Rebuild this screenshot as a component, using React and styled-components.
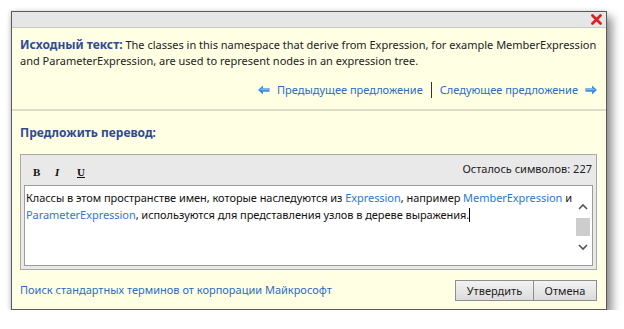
import React from 'react'
import styled, { createGlobalStyle } from 'styled-components'

const GlobalStyle = createGlobalStyle`
  body {
    margin: 0;
    background: #fff;
    font-family: 'Noto Sans', 'Liberation Sans', sans-serif;
  }
`

const Page = styled.div`
  padding: 11px 0 0 11px;
`
const Dialog = styled.div`
  width: 594px;
  height: 297px;
  border: 1px solid #5a5a5a;
  background: #ffffe3;
  box-shadow: 5px 6px 9px rgba(0, 0, 0, 0.45), -1px 0 4px rgba(0, 0, 0, 0.15);
  display: flex;
  flex-direction: column;
  font-size: 11px;
  color: #222;
`
const TitleBar = styled.div`
  height: 15px;
  background: #e6e6e6;
  border-bottom: 1px solid #c9c9c9;
  display: flex;
  justify-content: flex-end;
  align-items: center;
  padding-right: 4px;
`
const Section = styled.div`
  padding: ${(p) => p.pad || '0 9px 0 8px'};
  border-bottom: ${(p) => (p.divided ? '2px solid #dedcc8' : 'none')};
`
const Paragraph = styled.p`
  margin: 0;
  line-height: 16px;
`
const Label = styled.span`
  font-size: 12px;
  line-height: 14px;
  font-weight: bold;
  color: #2f4a96;
`
const Heading = styled.h3`
  margin: 0;
  font-size: 12px;
  line-height: 16px;
  font-weight: bold;
  color: #2f4a96;
`
const NavRow = styled.div`
  margin-top: 13px;
  display: flex;
  justify-content: flex-end;
  align-items: center;
  line-height: 16px;
`
const NavLink = styled.a`
  display: flex;
  align-items: center;
  gap: 7px;
  color: #2b6cc4;
  text-decoration: none;
  cursor: pointer;
`
const Separator = styled.span`
  width: 1px;
  height: 16px;
  background: #333;
  margin: 0 8px 0 8px;
`
const Editor = styled.div`
  margin: 13px 0 0;
  border: 1px solid #a9a9a9;
  background: #e9e9e9;
  padding: 0 3px 3px;
`
const Toolbar = styled.div`
  height: 30px;
  display: flex;
  align-items: center;
  padding: 0 0 0 9px;
`
const FormatButton = styled.span`
  width: 22px;
  font-family: 'Liberation Serif', serif;
  font-size: 11px;
  font-weight: bold;
  font-style: ${(p) => (p.italic ? 'italic' : 'normal')};
  text-decoration: ${(p) => (p.underline ? 'underline' : 'none')};
  color: #111;
  margin-top: 3px;
`
const Counter = styled.span`
  margin-left: auto;
  margin-top: -3px;
  padding-right: 1px;
`
const TextArea = styled.div`
  height: 79px;
  background: #fff;
  border: 1px solid #9c9c9c;
  display: flex;
`
const TextBody = styled.div`
  flex: 1;
  padding: 3px 0 0 1px;
  line-height: 17px;
  letter-spacing: -0.05px;
  color: #111;
`
const Term = styled.span`
  color: #2a78d2;
`
const Caret = styled.span`
  display: inline-block;
  width: 1px;
  height: 14px;
  background: #000;
  vertical-align: -3px;
`
const ScrollBar = styled.div`
  width: 14px;
  margin: 1px 2px 1px 0;
  display: flex;
  flex-direction: column;
  align-items: center;
  justify-content: space-between;
  padding: 16px 0 13px;
`
const Thumb = styled.div`
  width: 14px;
  height: 18px;
  background: #cdcdcd;
`
const Footer = styled.div`
  margin-top: 10px;
  display: flex;
  align-items: center;
  justify-content: space-between;
`
const FooterLink = styled.a`
  color: #2b6cc4;
  text-decoration: none;
  margin-top: -2px;
`
const Buttons = styled.div`
  display: flex;
`
const Button = styled.button`
  height: 21px;
  padding: 0;
  width: ${(p) => p.w}px;
  font-family: inherit;
  font-size: 11px;
  color: #222;
  border: 1px solid #8f8f8f;
  background: linear-gradient(#f2f2f2, #dcdcdc);
  & + & {
    margin-left: -1px;
  }
`

const Arrow = ({ dir }) => (
  <svg width="12" height="10" viewBox="0 0 12 10">
    <g transform={dir === 'left' ? '' : 'translate(12 0) scale(-1 1)'}>
      <path d="M0 5 L5 0.5 L5 3.2 L11.5 3.2 L11.5 6.8 L5 6.8 L5 9.5 Z" fill="#3c8fe2" />
      <path d="M5 3.2 L11.5 3.2 L11.5 5 L1 5 Z" fill="#7bb7f0" />
    </g>
  </svg>
)

const CloseIcon = () => (
  <svg width="11" height="11" viewBox="0 0 11 11">
    <path d="M1.5 1.5 L9.5 9.5 M9.5 1.5 L1.5 9.5" stroke="#e02020" strokeWidth="2.8" strokeLinecap="round" />
  </svg>
)

const Chevron = ({ up }) => (
  <svg width="10" height="7" viewBox="0 0 10 7">
    <path d={up ? 'M1 6 L5 2 L9 6' : 'M1 1 L5 5 L9 1'} stroke="#555" strokeWidth="1.6" fill="none" />
  </svg>
)

const App = () => {
  return (
    <Page>
      <GlobalStyle />
      <Dialog>
        <TitleBar>
          <CloseIcon />
        </TitleBar>
        <Section divided pad="9px 9px 11px 8px">
          <Paragraph>
            <Label>Исходный текст:</Label> The classes in this namespace that derive from Expression, for example MemberExpression and ParameterExpression, are used to represent nodes in an expression tree.
          </Paragraph>
          <NavRow>
            <NavLink>
              <Arrow dir="left" />
              Предыдущее предложение
            </NavLink>
            <Separator />
            <NavLink>
              Следующее предложение
              <Arrow dir="right" />
            </NavLink>
          </NavRow>
        </Section>
        <Section pad="14px 9px 0 8px">
          <Heading>Предложить перевод:</Heading>
          <Editor>
            <Toolbar>
              <FormatButton>B</FormatButton>
              <FormatButton italic>I</FormatButton>
              <FormatButton underline>U</FormatButton>
              <Counter>Осталось символов: 227</Counter>
            </Toolbar>
            <TextArea>
              <TextBody>
                Классы в этом пространстве имен, которые наследуются из <Term>Expression</Term>, например <Term>MemberExpression</Term> и <Term>ParameterExpression</Term>, используются для представления узлов в дереве выражения.<Caret />
              </TextBody>
              <ScrollBar>
                <Chevron up />
                <Thumb />
                <Chevron />
              </ScrollBar>
            </TextArea>
          </Editor>
          <Footer>
            <FooterLink>Поиск стандартных терминов от корпорации Майкрософт</FooterLink>
            <Buttons>
              <Button w={79}>Утвердить</Button>
              <Button w={64}>Отмена</Button>
            </Buttons>
          </Footer>
        </Section>
      </Dialog>
    </Page>
  )
}

export default App
